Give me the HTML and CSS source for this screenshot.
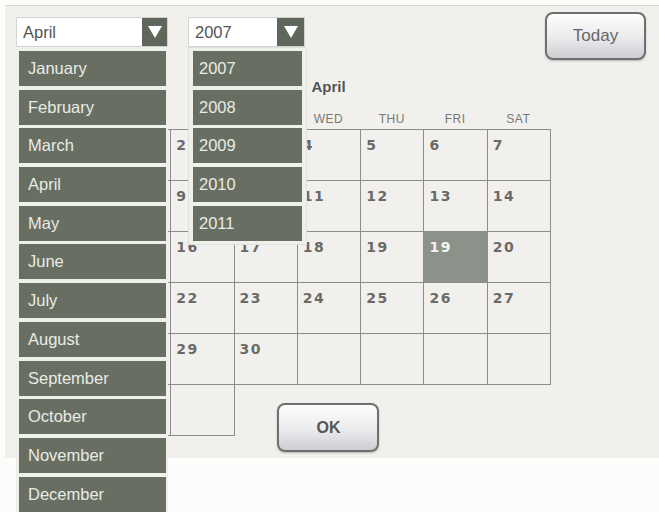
FILE: index.html
```html
<!DOCTYPE html>
<html lang="en">
<head>
    <meta charset="UTF-8">
    <title>Date Picker</title>
    <link rel="stylesheet" href="styles.css">
</head>
<body>
    <div class="panel">
        <div class="toolbar">
            <div class="picker picker-month">
                <div class="select">
                    <span class="select-value">April</span>
                    <span class="select-arrow"></span>
                </div>
                <ul class="dropdown">
                    <li>January</li>
                    <li>February</li>
                    <li>March</li>
                    <li>April</li>
                    <li>May</li>
                    <li>June</li>
                    <li>July</li>
                    <li>August</li>
                    <li>September</li>
                    <li>October</li>
                    <li>November</li>
                    <li>December</li>
                </ul>
            </div>
            <div class="picker picker-year">
                <div class="select">
                    <span class="select-value">2007</span>
                    <span class="select-arrow"></span>
                </div>
                <ul class="dropdown">
                    <li>2007</li>
                    <li>2008</li>
                    <li>2009</li>
                    <li>2010</li>
                    <li>2011</li>
                </ul>
            </div>
            <button class="btn btn-today">Today</button>
        </div>

        <div class="calendar">
            <div class="month-title">April</div>
            <div class="weekdays">
                <span>SUN</span><span>MON</span><span>TUE</span><span>WED</span><span>THU</span><span>FRI</span><span>SAT</span>
            </div>
            <div class="days">
                <div class="day">1</div><div class="day">2</div><div class="day">3</div><div class="day">4</div><div class="day">5</div><div class="day">6</div><div class="day">7</div>
                <div class="day">8</div><div class="day">9</div><div class="day">10</div><div class="day">11</div><div class="day">12</div><div class="day">13</div><div class="day">14</div>
                <div class="day">15</div><div class="day">16</div><div class="day">17</div><div class="day">18</div><div class="day">19</div><div class="day selected">19</div><div class="day">20</div>
                <div class="day">21</div><div class="day">22</div><div class="day">23</div><div class="day">24</div><div class="day">25</div><div class="day">26</div><div class="day">27</div>
                <div class="day">28</div><div class="day">29</div><div class="day">30</div><div class="day"></div><div class="day"></div><div class="day"></div><div class="day"></div>
                <div class="day"></div><div class="day"></div>
                <button class="btn btn-ok">OK</button>
            </div>
        </div>
    </div>
</body>
</html>
```

FILE: styles.css
```css
:root {
    --panel-bg: #f2f0ec;
    --menu-bg: #eef0ea;
    --item-bg: #686f62;
    --item-text: #e9ebe5;
    --grid-line: #8c8c8a;
    --text-grey: #666666;
}

html {
    overflow: hidden;
}

body {
    box-sizing: border-box;
    height: 512px;
    margin: 0;
    padding-top: 5px;
    overflow: hidden;
    background-color: #fcfcfb;
    font-family: 'Liberation Sans', Arial, sans-serif;
}

.panel {
    margin-left: 5px;
    height: 452px;
    background-color: var(--panel-bg);
    border-top: 1px solid #d6d6d4;
}

.toolbar {
    display: flex;
    align-items: flex-start;
    padding: 6px 13px 0 11px;
}

.picker {
    position: relative;
    margin-top: 5px;
}

.picker-month .select {
    width: 150px;
}

.picker-year {
    margin-left: 20px;
}

.picker-year .select {
    width: 115px;
}

.select {
    display: flex;
    align-items: center;
    height: 28px;
    background-color: #ffffff;
    border: 1px solid #d2d2d0;
}

.select-value {
    flex: 1;
    padding-left: 6px;
    font-size: 16.5px;
    color: #555555;
}

.select-arrow {
    position: relative;
    width: 25px;
    height: 28px;
    background-color: #5f665a;
}

.picker-year .select-arrow {
    width: 27px;
}

.select-arrow:after {
    content: "";
    position: absolute;
    left: 50%;
    top: 8px;
    margin-left: -7px;
    border-left: 7px solid transparent;
    border-right: 7px solid transparent;
    border-top: 12px solid #ffffff;
}

/* open dropdown menus */
.dropdown {
    position: absolute;
    top: 30px;
    left: 0;
    z-index: 2;
    display: flex;
    flex-direction: column;
    gap: 3.7px;
    margin: 0;
    padding: 4px 2px 4px 3px;
    list-style: none;
    background-color: var(--menu-bg);
}

.picker-month .dropdown {
    width: 147px;
}

.picker-year .dropdown {
    left: 0;
    width: 109px;
    padding: 3px 4px 3px 4px;
    border: 1px solid #dfe2da;
}

.dropdown li {
    flex-shrink: 0;
    height: 35px;
    line-height: 35px;
    padding-left: 9px;
    font-size: 16.5px;
    color: var(--item-text);
    background-color: var(--item-bg);
}

.picker-year .dropdown li {
    padding-left: 6px;
}

.btn {
    font-family: 'Liberation Sans', Arial, sans-serif;
    color: var(--text-grey);
    background: linear-gradient(#fdfdfd, #ebeaec 55%, #cfcdd2);
    border: 2px solid #6f6f6f;
    border-radius: 8px;
    box-shadow: 0 1px 2px rgba(0, 0, 0, 0.25);
    cursor: pointer;
}

.btn-today {
    width: 101px;
    height: 48px;
    margin-left: auto;
    font-size: 17px;
}

.calendar {
    width: 443px;
    margin: 17px 0 0 102px;
}

.month-title {
    height: 20px;
    line-height: 20px;
    text-align: center;
    font-size: 15px;
    font-weight: bold;
    color: #555555;
}

.weekdays {
    display: grid;
    grid-template-columns: repeat(7, 1fr);
    height: 16px;
    margin: 14px 0 2px;
    line-height: 16px;
    text-align: center;
    font-size: 12px;
    letter-spacing: 0.5px;
    color: #777777;
}

.days {
    display: grid;
    grid-template-columns: repeat(7, 1fr);
    grid-auto-rows: 51px;
}

.day {
    margin: 0 -1px -1px 0;
    padding: 7px 0 0 5px;
    font-family: 'DejaVu Sans', sans-serif;
    font-size: 14px;
    font-weight: bold;
    letter-spacing: 1.5px;
    color: #6a6a6a;
    border: 1px solid var(--grid-line);
}

.day.selected {
    color: #f4f4f2;
    background-color: #8c918a;
}

.btn-ok {
    grid-column: 3 / 6;
    grid-row: 6;
    justify-self: center;
    width: 102px;
    height: 49px;
    margin-top: 19px;
    font-size: 16px;
    font-weight: bold;
    color: #555555;
}
```
